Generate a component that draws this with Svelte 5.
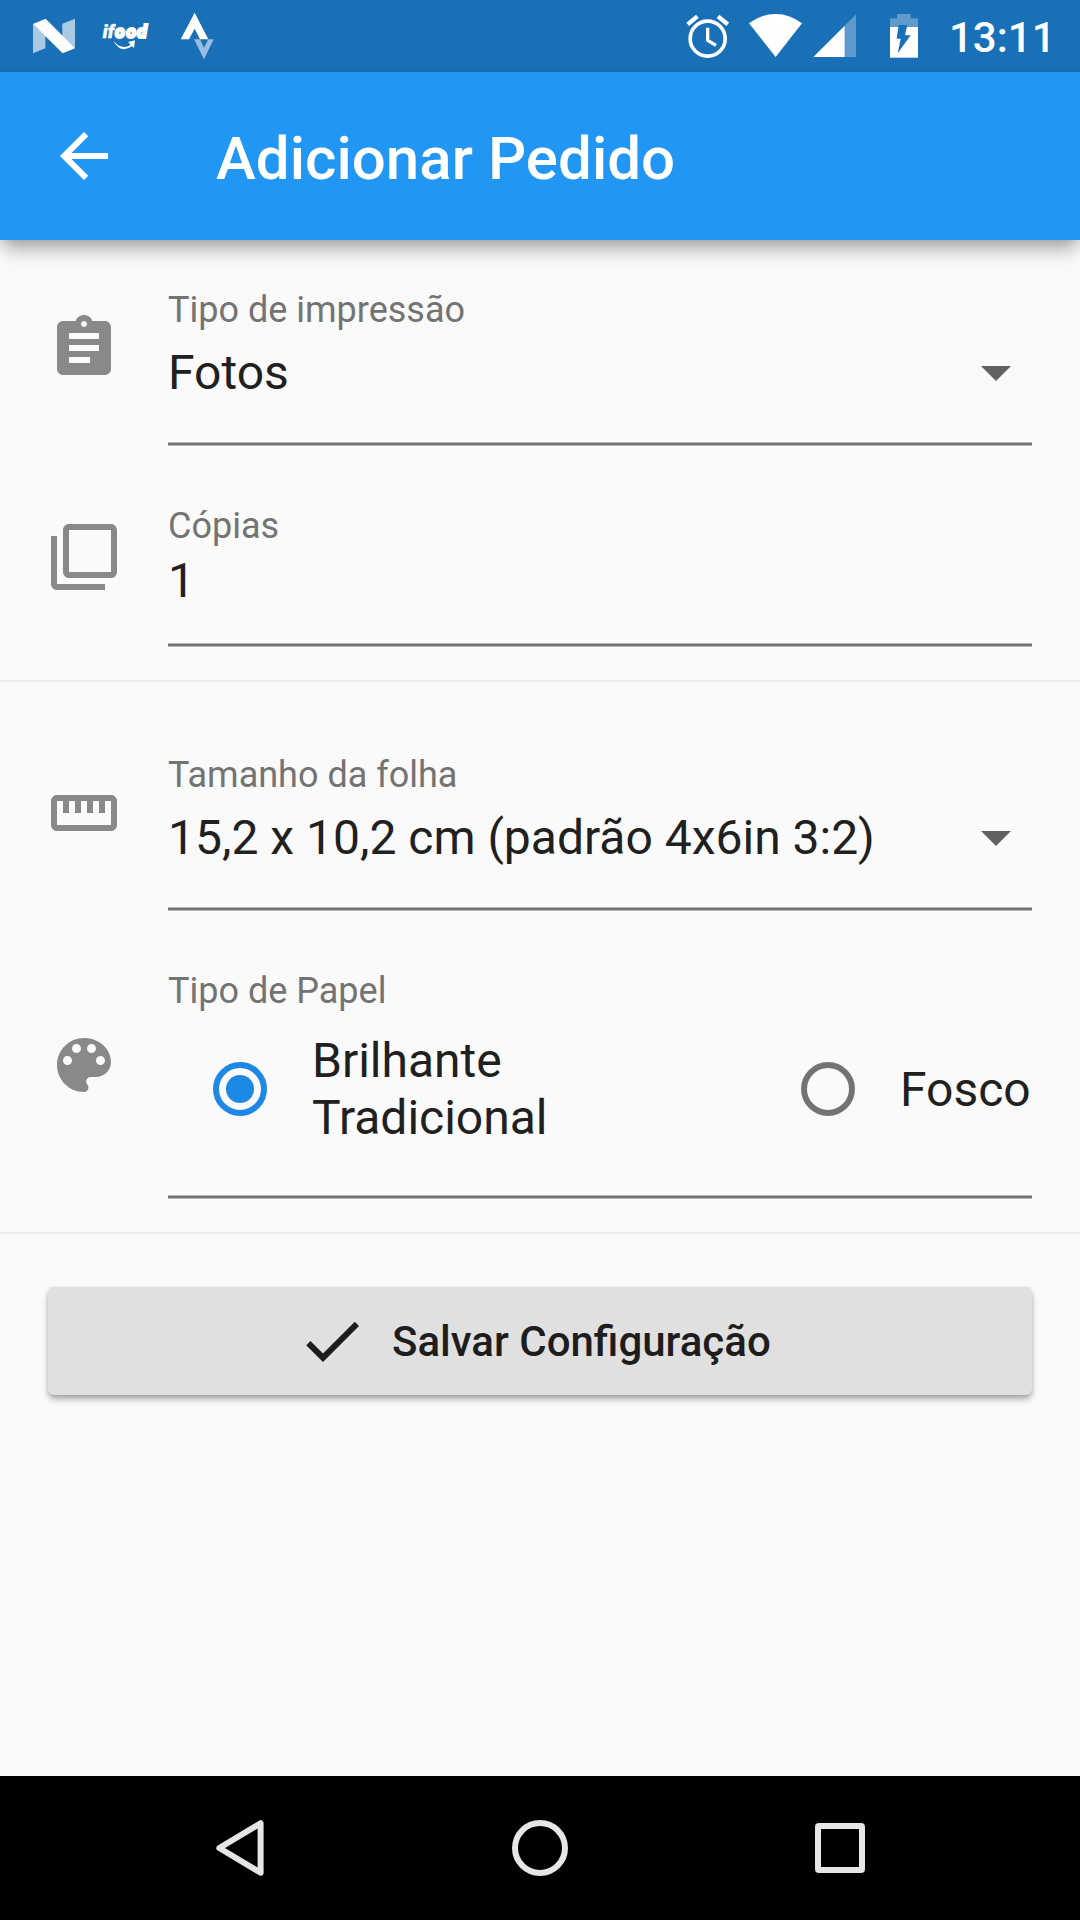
<script>
  let paper = $state('brilhante');

  const icons = {
    assignment:
      'M19 3h-4.18C14.4 1.84 13.3 1 12 1c-1.3 0-2.4.84-2.82 2H5c-1.1 0-2 .9-2 2v14c0 1.1.9 2 2 2h14c1.1 0 2-.9 2-2V5c0-1.1-.9-2-2-2zm-7 0c.55 0 1 .45 1 1s-.45 1-1 1-1-.45-1-1 .45-1 1-1zm2 14H7v-2h7v2zm3-4H7v-2h10v2zm0-4H7V7h10v2z',
    copies:
      'M3 5H1v16c0 1.1.9 2 2 2h16v-2H3V5zm18-4H7c-1.1 0-2 .9-2 2v14c0 1.1.9 2 2 2h14c1.1 0 2-.9 2-2V3c0-1.1-.9-2-2-2zm0 16H7V3h14v14z',
    ruler:
      'M21 6H3c-1.1 0-2 .9-2 2v8c0 1.1.9 2 2 2h18c1.1 0 2-.9 2-2V8c0-1.1-.9-2-2-2zm0 10H3V8h2v4h2V8h2v4h2V8h2v4h2V8h2v4h2V8h2v8z',
    palette:
      'M12 3c-4.97 0-9 4.03-9 9s4.03 9 9 9c.83 0 1.5-.67 1.5-1.5 0-.39-.15-.74-.39-1.01-.23-.26-.38-.61-.38-.99 0-.83.67-1.5 1.5-1.5H16c2.76 0 5-2.24 5-5 0-4.42-4.03-8-9-8zm-5.5 9c-.83 0-1.5-.67-1.5-1.5S5.67 9 6.5 9 8 9.67 8 10.5 7.33 12 6.5 12zm3-4C8.67 8 8 7.33 8 6.5S8.67 5 9.5 5s1.5.67 1.5 1.5S10.33 8 9.5 8zm5 0c-.83 0-1.5-.67-1.5-1.5S13.67 5 14.5 5s1.5.67 1.5 1.5S15.33 8 14.5 8zm3 4c-.83 0-1.5-.67-1.5-1.5S16.67 9 17.5 9s1.5.67 1.5 1.5-.67 1.5-1.5 1.5z',
    back: 'M20 11H7.83l5.59-5.59L12 4l-8 8 8 8 1.41-1.41L7.83 13H20v-2z',
    dropdown: 'M7 10l5 5 5-5z',
    check: 'M9 16.17L4.83 12l-1.42 1.41L9 19 21 7l-1.41-1.41z'
  };
</script>

{#snippet icon(name)}
  <svg class="icon" viewBox="0 0 24 24" aria-hidden="true"><path d={icons[name]} /></svg>
{/snippet}

<div class="screen">
  <div class="status">
    <!-- notifications -->
    <svg class="nougat" viewBox="96 0 132 216">
      <path fill-opacity=".63" d="M99 72L136 107V145L99 160ZM187 71L225 56V145L187 110Z" />
      <path d="M99 72L137 56L225 145L188 160Z" />
    </svg>
    <svg class="ifood" viewBox="303 0 150 216">
      <text y="113"><tspan x="308">i</tspan><tspan x="323">f</tspan><tspan class="bold" x="345">o</tspan><tspan class="bold" x="379">o</tspan><tspan class="bold" x="411">d</tspan></text>
      <path d="M339 122Q366 152 392 134L384 126L405 121L402 144L396 139Q362 162 339 122Z" />
    </svg>
    <svg class="strava" viewBox="540 0 105 216">
      <path fill-opacity=".55" d="M582 118H600L612 143L625 118H641L612 178Z" />
      <path d="M584 38L542 118H567L584 86L600 118H625Z" />
    </svg>
    <span class="spacer"></span>
    <!-- system -->
    <svg class="alarm" viewBox="78 0 129 216">
      <g class="stroke">
        <circle cx="143" cy="116" r="52.5" stroke-width="11" />
        <path stroke-width="10" d="M143 83V121L168 136" />
        <path stroke-width="13" d="M83 73L112 49M174 49L203 73" />
      </g>
    </svg>
    <svg class="wifi" viewBox="264 0 165 216">
      <path d="M267 70A127 127 0 0 1 426 70L347 171Z" />
    </svg>
    <svg class="signal" viewBox="459 0 129 216">
      <path fill-opacity=".3" d="M554 77L588 43V171H554Z" />
      <path d="M460 171L554 77V171Z" />
    </svg>
    <svg class="battery" viewBox="690 0 84 216">
      <path fill-opacity=".3" d="M690 55H711V42H752V55H774V81H690Z" />
      <path d="M690 81H774V173H690Z" />
      <path class="bolt" d="M716 75H742L735 106H752L713 160L722 116H710Z" />
    </svg>
    <span class="time">13:11</span>
  </div>

  <header class="appbar">
    {@render icon('back')}
    <h1>Adicionar Pedido</h1>
  </header>

  <main>
    <section class="group first">
      <div class="row">
        {@render icon('assignment')}
        <div class="field">
          <span class="label">Tipo de impressão</span>
          <div class="select"><span>Fotos</span>{@render icon('dropdown')}</div>
        </div>
      </div>
      <div class="row copies">
        {@render icon('copies')}
        <div class="field">
          <span class="label">Cópias</span>
          <div class="value">1</div>
        </div>
      </div>
    </section>

    <section class="group second">
      <div class="row">
        {@render icon('ruler')}
        <div class="field">
          <span class="label">Tamanho da folha</span>
          <div class="select"><span>15,2 x 10,2 cm (padrão 4x6in 3:2)</span>{@render icon('dropdown')}</div>
        </div>
      </div>
      <div class="row paper">
        {@render icon('palette')}
        <div class="field">
          <span class="label">Tipo de Papel</span>
          <div class="options">
            <div class="option wide">
              <span class="radio" class:on={paper === 'brilhante'}></span>
              <span>Brilhante<br />Tradicional</span>
            </div>
            <div class="option">
              <span class="radio" class:on={paper === 'fosco'}></span>
              <span>Fosco</span>
            </div>
          </div>
        </div>
      </div>
    </section>

    <button class="save">{@render icon('check')}<span>Salvar Configuração</span></button>
  </main>

  <nav>
    <svg viewBox="0 0 72 72"><path d="M56.6 11.2V60.8L15.3 36Z" /></svg>
    <svg viewBox="0 0 72 72"><circle cx="36" cy="36" r="25" /></svg>
    <svg viewBox="0 0 72 72"><rect x="14" y="14" width="44" height="44" rx="1" /></svg>
  </nav>
</div>

<style>
  :global(body) {
    margin: 0;
  }
  .screen {
    width: 1080px;
    height: 1920px;
    display: flex;
    flex-direction: column;
    overflow: hidden;
    background: #fafafa;
    color: #202020;
    font: 400 48px/57px Roboto, sans-serif;
  }
  svg {
    display: block;
    flex: none;
  }
  .icon {
    width: 72px;
    height: 72px;
    fill: currentColor;
  }

  .status {
    flex: none;
    height: 72px;
    display: flex;
    box-sizing: border-box;
    padding: 0 24.5px 0 32px;
    background: #1970b6;
    color: #fff;
  }
  .status svg {
    height: 72px;
    fill: #fff;
  }
  .nougat { width: 44px; }
  .ifood { width: 50px; margin-left: 25px; }
  .ifood text {
    font: italic 900 54px Roboto, sans-serif;
    stroke: #fff;
    stroke-width: 1.5px;
  }
  .ifood .bold {
    stroke-width: 6px;
  }
  .strava { width: 35px; margin-left: 29px; }
  .spacer { flex: 1; }
  .alarm { width: 43px; }
  .stroke { fill: none; stroke: #fff; }
  .wifi { width: 55px; margin-left: 19px; }
  .signal { width: 43px; margin-left: 10px; }
  .battery { width: 28px; margin-left: 34px; }
  .bolt { fill: #1970b6; }
  .time {
    margin: 13px 0 0 30.5px;
    font-size: 42px;
    font-weight: 500;
    line-height: 49px;
  }

  .appbar {
    flex: none;
    height: 168px;
    box-sizing: border-box;
    display: flex;
    align-items: flex-start;
    gap: 96px;
    padding: 48px 48px 0;
    background: #2196f3;
    color: #fff;
    z-index: 1;
    box-shadow: 0 11px 18px -3px rgba(0, 0, 0, 0.35), 0 2px 8px rgba(0, 0, 0, 0.06);
  }
  h1 {
    margin: 3px 0 0;
    font-size: 60px;
    font-weight: 500;
    line-height: 71px;
    letter-spacing: 0.05px;
  }

  main {
    flex: 1;
    display: flex;
    flex-direction: column;
  }
  .group {
    display: flex;
    flex-direction: column;
    gap: 59px;
    padding: 0 48px 33px;
    border-bottom: 2px solid #ebebeb;
  }
  .first { padding-top: 49px; }
  .second { padding-top: 72px; }
  .row {
    display: flex;
    gap: 48px;
    align-items: flex-start;
  }
  .row > :global(.icon) {
    margin-top: 23px;
    color: #898989;
  }
  .copies > :global(.icon) { margin-top: 16px; }
  .paper > :global(.icon) { margin-top: 59px; }
  .field {
    flex: 1;
    display: flex;
    flex-direction: column;
  }
  /* 3px underline resting on half pixels */
  .field::after {
    content: '';
    height: 4px;
    background: linear-gradient(#b6b6b6 1px, #737373 1px 3px, #b6b6b6 3px);
  }
  .label {
    color: #737373;
    font-size: 36px;
    line-height: 42px;
  }
  .select {
    display: flex;
    justify-content: space-between;
    height: 111px;
    padding-top: 13px;
    box-sizing: border-box;
  }
  .select > :global(.icon) {
    margin-top: -8px;
    color: #616161;
  }
  .value {
    padding: 5px 0 34px;
  }
  .options {
    display: flex;
    justify-content: space-between;
    align-items: center;
    padding: 20px 1.3px 49px 0;
  }
  .option {
    display: flex;
    align-items: center;
    gap: 45px;
  }
  .wide { padding-left: 45px; }
  .radio {
    width: 54px;
    height: 54px;
    box-sizing: border-box;
    border: 6px solid #737373;
    border-radius: 50%;
    display: grid;
    place-items: center;
  }
  .radio.on { border-color: #1e88e5; }
  .radio.on::after {
    content: '';
    width: 28px;
    height: 28px;
    border-radius: 50%;
    background: #1e88e5;
  }

  .save {
    height: 108px;
    margin: 53px 48px 0;
    padding: 0 0 0 247.5px;
    display: flex;
    align-items: center;
    gap: 24.5px;
    border: 0;
    border-radius: 6px;
    background: #e0e0e0;
    color: #1d1d1d;
    font: 500 42px/49px Roboto, sans-serif;
    box-shadow: 0 5px 7px -1px rgba(0, 0, 0, 0.32), 0 1px 4px rgba(0, 0, 0, 0.12);
  }

  nav {
    flex: none;
    height: 144px;
    display: flex;
    justify-content: center;
    align-items: center;
    gap: 228px;
    background: #000;
  }
  nav svg {
    width: 72px;
    height: 72px;
    fill: none;
    stroke: #e6e6e6;
    stroke-width: 6px;
    stroke-linejoin: round;
  }
</style>
